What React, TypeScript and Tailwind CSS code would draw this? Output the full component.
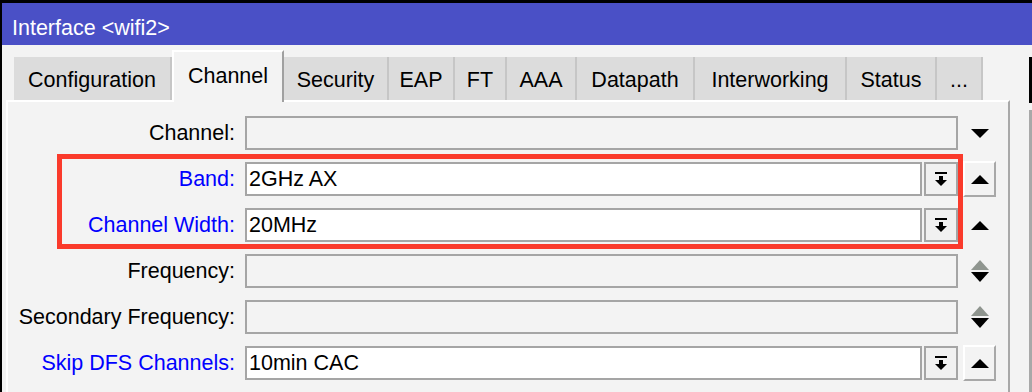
type Row = {
  label: string
  blue?: boolean
  value?: string
  kind: 'down' | 'select' | 'updown'
  up?: 'boxed' | 'plain'
}

const rows: Row[] = [
  { label: 'Channel', kind: 'down' },
  { label: 'Band', blue: true, value: '2GHz AX', kind: 'select', up: 'boxed' },
  { label: 'Channel Width', blue: true, value: '20MHz', kind: 'select', up: 'plain' },
  { label: 'Frequency', kind: 'updown' },
  { label: 'Secondary Frequency', kind: 'updown' },
  { label: 'Skip DFS Channels', blue: true, value: '10min CAC', kind: 'select', up: 'boxed' },
]

const tabs = [
  { name: 'Configuration', w: 'w-[158px]' },
  { name: 'Channel', w: 'w-[112px]', active: true },
  { name: 'Security', w: 'w-[105px]' },
  { name: 'EAP', w: 'w-[66px]' },
  { name: 'FT', w: 'w-[52px]' },
  { name: 'AAA', w: 'w-[70px]' },
  { name: 'Datapath', w: 'w-[118px]' },
  { name: 'Interworking', w: 'w-[152px]' },
  { name: 'Status', w: 'w-[90px]' },
  { name: '...', w: 'w-[46px]' },
]

function TriDown() {
  return (
    <svg width="18" height="9" viewBox="0 0 18 9">
      <polygon points="0,0 18,0 9,9" fill="#000" />
    </svg>
  )
}

function TriUp() {
  return (
    <svg width="18" height="9" viewBox="0 0 18 9">
      <polygon points="0,9 18,9 9,0" fill="#000" />
    </svg>
  )
}

function UpDown() {
  return (
    <svg width="18" height="22" viewBox="0 0 18 22">
      <polygon points="0,10 18,10 9,0" fill="#8f958f" />
      <polygon points="0,12 18,12 9,22" fill="#000" />
    </svg>
  )
}

// bar over a down arrow, the winbox combo button
function DropIcon() {
  return (
    <svg width="14" height="15" viewBox="0 0 14 15">
      <rect x="1" y="0" width="12" height="2" fill="#000" />
      <rect x="5" y="4" width="4" height="4" fill="#000" />
      <polygon points="1,8 13,8 7,14" fill="#000" />
    </svg>
  )
}

function FieldRow({ row }: { row: Row }) {
  const editable = row.kind === 'select'
  return (
    <div className="flex h-[34px] items-center">
      <div
        className={`w-[227px] shrink-0 pt-[2px] text-right ${row.blue ? 'text-[#0000ff]' : 'text-black'}`}
      >
        {row.label}:
      </div>
      <div className="ml-[10px] flex h-full w-[713px] shrink-0 gap-[2px]">
        <div
          className={`flex h-full flex-1 items-center border-2 border-[#a5a5a5] pt-[2px] pl-[2px] ${
            editable ? 'bg-white' : 'bg-[#f3f3f3]'
          }`}
        >
          {row.value}
        </div>
        {editable && (
          <div className="flex h-full w-[34px] items-center justify-center border-2 border-[#a5a5a5] bg-[#f1f1f1]">
            <DropIcon />
          </div>
        )}
      </div>
      <div className="ml-[5px] flex h-full w-[33px] shrink-0 items-center justify-center">
        {row.kind === 'down' && <TriDown />}
        {row.kind === 'updown' && <UpDown />}
        {row.up === 'plain' && <TriUp />}
        {row.up === 'boxed' && (
          <div className="flex h-[36px] w-[33px] items-center justify-center border-2 border-t-white border-l-white border-r-[#a8a8a8] border-b-[#a8a8a8]">
            <TriUp />
          </div>
        )}
      </div>
    </div>
  )
}

export default function App() {
  return (
    <div
      className="relative flex h-[392px] w-[1032px] flex-col overflow-hidden border-t-[3px] border-l-[2px] border-black bg-[#f3f3f3] text-[21.5px] leading-none text-black"
      style={{ fontFamily: '"Liberation Sans", Arial, sans-serif' }}
    >
      <div className="flex h-[42px] shrink-0 items-center bg-[#4a50c6] pt-[10px] pl-[10px] text-[21.5px] text-white">
        Interface &lt;wifi2&gt;
      </div>

      <div className="flex flex-1">
        <div className="flex w-[1008px] shrink-0 flex-col">
          <div className="flex h-[55px] items-end pl-[12px]">
            {tabs.map((t) =>
              t.active ? (
                <div
                  key={t.name}
                  className={`${t.w} relative z-10 -mb-[2px] flex h-[52px] items-center justify-center border-t-2 border-l-2 border-r-2 border-t-white border-l-white border-r-[#a0a0a0] bg-[#f3f3f3] pb-[1px]`}
                >
                  {t.name}
                </div>
              ) : (
                <div
                  key={t.name}
                  className={`${t.w} flex h-[43px] items-center justify-center border-r-2 border-[#c6c6c6] bg-[#dcdcdc] pt-[4px]`}
                >
                  {t.name}
                </div>
              ),
            )}
          </div>

          <div className="ml-[4px] flex flex-1 flex-col gap-[12px] border-t-2 border-l-2 border-r-2 border-t-white border-l-white border-r-[#a8a8a8] pt-[14px]">
            {rows.map((r) => (
              <FieldRow key={r.label} row={r} />
            ))}
          </div>
        </div>

        <div className="flex flex-1 flex-col items-end">
          <div className="mt-[12px] h-[46px] w-[3px] bg-black" />
          <div className="mt-[7px] w-[3px] flex-1 bg-[#a8a8a8]" />
        </div>
      </div>

      <div className="absolute top-[151px] left-[55px] h-[95px] w-[906px] border-[5px] border-[#fa3a2b]" />
    </div>
  )
}
